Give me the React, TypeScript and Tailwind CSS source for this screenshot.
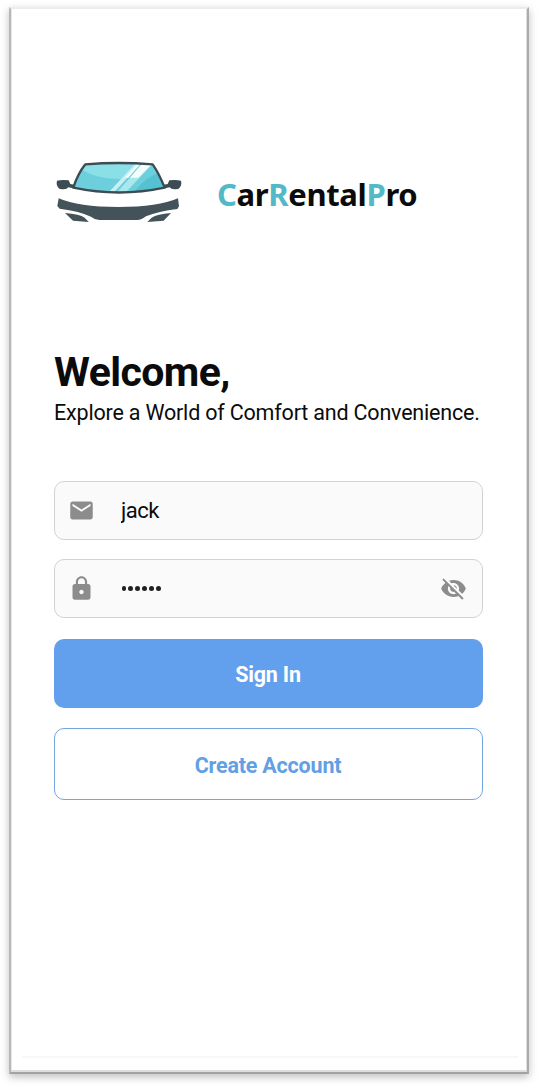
import { useState } from "react";
import { MdEmail, MdLock, MdVisibility, MdVisibilityOff } from "react-icons/md";

function CarLogo() {
  return (
    <svg viewBox="0 0 450 255" className="h-[85px] w-[150px] shrink-0" aria-hidden="true">
      <defs>
        <clipPath id="glass">
          <path d="M121 43 Q222 35 323 43 Q342 70 359 113 Q222 142 85 113 Q98 72 121 43Z" />
        </clipPath>
      </defs>
      <g clipPath="url(#glass)">
        <rect x="70" y="30" width="310" height="110" fill="#6ccfdb" />
        <path d="M105 55 Q155 92 245 86 L290 35 L120 35Z" fill="#8be0e8" />
        <path d="M268 125 Q305 78 340 70 L370 125Z" fill="#55c2d1" />
        <path d="M190 128 L270 42 L285 42 L206 128Z" fill="#c8eff4" />
        <path d="M215 128 L288 46 L319 46 L241 128Z" fill="#a9e8ef" />
        <path d="M240 83 L275 44 L284 44 L250 83Z" fill="#f4fdfe" />
        <path d="M255 83 L288 44 L319 44 L280 83Z" fill="#f4fdfe" />
      </g>
      <path d="M121 43 Q222 35 323 43 Q342 70 359 113 Q222 142 85 113 Q98 72 121 43Z" fill="none" stroke="#3d4b53" strokeWidth="7" strokeLinejoin="round" />
      <path d="M36 92 Q52 88 71 91 L76 102 L88 104 L84 115 L70 112 Q64 121 43 116 Q32 106 36 92Z" fill="#3d4b53" />
      <path d="M408 92 Q392 88 373 91 L368 102 L356 104 L360 115 L374 112 Q380 121 401 116 Q412 106 408 92Z" fill="#3d4b53" />
      <path d="M41 145 Q100 171 220 171 Q340 171 399 145 L402 169 L397 177 Q340 184 303 199 Q290 210 276 210 L163 210 Q150 210 138 200 Q105 184 44 176 L37 168Z" fill="#44525a" />
      <path d="M60 189 Q104 192 119 203 L131 216 L84 212Z" fill="#44525a" />
      <path d="M378 189 Q336 192 320 203 L307 216 L356 212Z" fill="#44525a" />
    </svg>
  );
}

export default function App() {
  const [hidden, setHidden] = useState(true);
  return (
    <div className="h-[1088px] w-[538px] bg-white pl-[9px] pt-[7px] font-['Roboto',sans-serif] text-[#0b0b0b]">
      <main className="flex h-[1067px] w-[520px] flex-col border-2 border-t-[#ececec] border-r-[#acacac] border-b-[#a2a2a2] border-l-[#b8b8b8] bg-white pl-[43px] shadow-[0_3px_8px_rgba(0,0,0,0.25),inset_0_-2px_0_#dedede,inset_-1px_0_0_#dedede,inset_1px_0_0_#e6e6e6]">
        <header className="-ml-[9px] mt-[141px] flex h-[85px] items-start">
          <CarLogo />
          <div className="ml-[22px] mt-[23px] whitespace-nowrap font-['Noto_Sans',sans-serif] text-[31px] leading-[42px] font-bold tracking-[-0.35px]">
            <span className="text-[#51b9c7]">C</span>ar<span className="text-[#51b9c7]">R</span>ental<span className="text-[#51b9c7]">P</span>ro
          </div>
        </header>
        <h1 className="mt-[113px] h-[51px] whitespace-nowrap text-[41px] leading-[48px] font-bold tracking-[-0.6px]">Welcome,</h1>
        <p className="h-[28px] whitespace-nowrap text-[21.5px] leading-[28px] tracking-[-0.19px]">Explore a World of Comfort and Convenience.</p>
        <form className="mt-[54px] flex w-[429px] flex-col" onSubmit={(e) => e.preventDefault()}>
          <label className="flex h-[59px] items-center rounded-[10px] border border-[#d2d2d2] bg-[#fafafa] pl-[13px]">
            <MdEmail className="size-[27px] text-[#8c8c8c]" />
            <input aria-label="Username" defaultValue="jack" className="ml-[26px] w-[250px] bg-transparent text-[22px] tracking-[-0.5px] outline-none" />
          </label>
          <div className="mt-[19px] flex h-[59px] items-center rounded-[10px] border border-[#d2d2d2] bg-[#fafafa] pr-[15px] pl-[13px]">
            <MdLock className="size-[27px] text-[#8c8c8c]" />
            <span aria-label="Password" className="ml-[26.5px] flex flex-1 gap-[2.8px]">
              {[0, 1, 2, 3, 4, 5].map((i) => (
                <i key={i} className="size-[4.2px] rounded-full bg-[#202020]" />
              ))}
            </span>
            <button type="button" aria-label="Toggle password visibility" onClick={() => setHidden(!hidden)}>
              {hidden ? <MdVisibilityOff className="size-[27px] text-[#8c8c8c]" /> : <MdVisibility className="size-[27px] text-[#8c8c8c]" />}
            </button>
          </div>
          <button className="mt-[21px] h-[69px] rounded-[10px] bg-[#62a0ee] pt-[4px] pr-[1px] text-[21.5px] font-bold tracking-[-0.2px] text-white">Sign In</button>
          <button type="button" className="mt-[20px] h-[72px] rounded-[10px] border border-[#73a8df] bg-white pt-[4px] pr-[1px] text-[21.5px] font-bold tracking-[-0.2px] text-[#629fe4]">Create Account</button>
        </form>
        <div className="mt-auto mb-[14px] -ml-[32px] h-[2px] w-[496px] bg-[#f7f7f7]" />
      </main>
    </div>
  );
}
